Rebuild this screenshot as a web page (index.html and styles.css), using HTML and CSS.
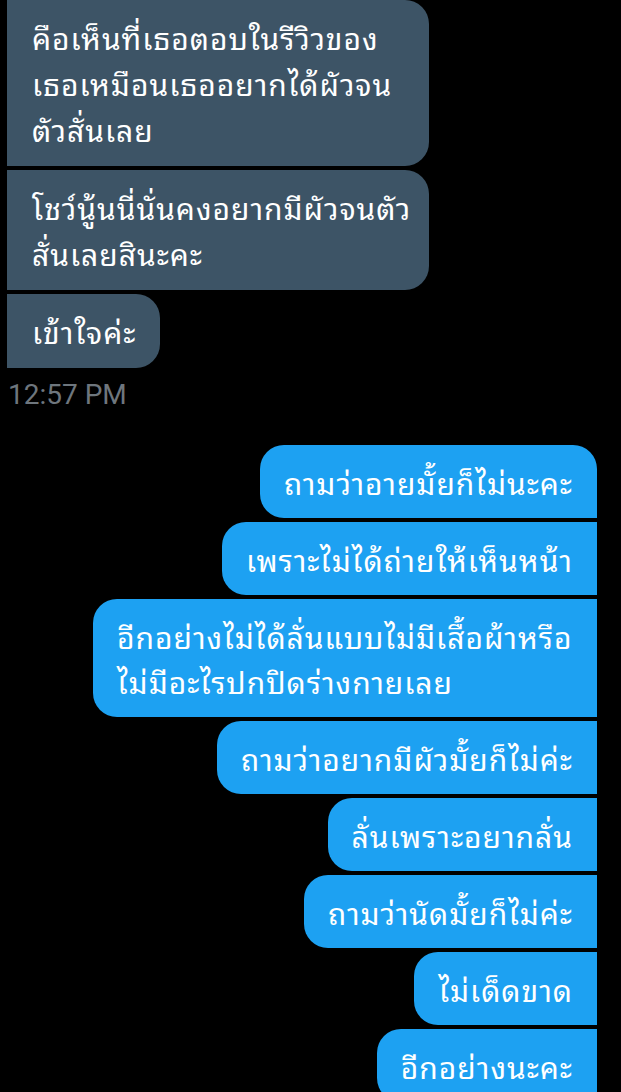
FILE: index.html
```html
<!DOCTYPE html>
<html lang="th">
<head>
  <meta charset="UTF-8">
  <meta name="viewport" content="width=device-width, initial-scale=1">
  <title>Messages</title>
  <link rel="stylesheet" href="styles.css">
</head>
<body>
  <div class="thread">
    <div class="group group-in">
      <div class="bubble in wide">คือเห็นที่เธอตอบในรีวิวของ<br>เธอเหมือนเธออยากได้ผัวจน<br>ตัวสั่นเลย</div>
      <div class="bubble in wide">โชว์นู้นนี่นั่นคงอยากมีผัวจนตัว<br>สั่นเลยสินะคะ</div>
      <div class="bubble in">เข้าใจค่ะ</div>
      <div class="time">12:57 PM</div>
    </div>

    <div class="group group-out">
      <div class="bubble out first">ถามว่าอายมั้ยก็ไม่นะคะ</div>
      <div class="bubble out">เพราะไม่ได้ถ่ายให้เห็นหน้า</div>
      <div class="bubble out wide">อีกอย่างไม่ได้ลั่นแบบไม่มีเสื้อผ้าหรือ<br>ไม่มีอะไรปกปิดร่างกายเลย</div>
      <div class="bubble out">ถามว่าอยากมีผัวมั้ยก็ไม่ค่ะ</div>
      <div class="bubble out">ลั่นเพราะอยากลั่น</div>
      <div class="bubble out">ถามว่านัดมั้ยก็ไม่ค่ะ</div>
      <div class="bubble out">ไม่เด็ดขาด</div>
      <div class="bubble out">อีกอย่างนะคะ</div>
    </div>
  </div>
</body>
</html>
```

FILE: styles.css
```css
:root {
  --bg: #000000;
  --bubble-in: #3d5466;
  --bubble-out: #1da1f2;
  --text: #ffffff;
  --muted: #6e767d;
  --font-thai: "Noto Sans Thai Looped", "Noto Sans Thai UI", Loma, Garuda, Waree, "Noto Sans Thai", "Noto Sans", Roboto, sans-serif;
  --font-ui: Roboto, "Liberation Sans", sans-serif;
}
html, body {
  margin: 0;
  background: var(--bg);
}
body {
  height: 1092px;
  overflow: hidden;
}
.thread {
  display: flex;
  flex-direction: column;
  padding: 0 24px 0 7px;
}
.group {
  display: flex;
  flex-direction: column;
  gap: 4px;
}
.group-in {
  align-items: flex-start;
}
.group-out {
  align-items: flex-end;
  margin-top: 34px;
}
.bubble {
  font-family: var(--font-thai);
  font-size: 30px;
  letter-spacing: 1px;
  color: var(--text);
  padding: 14px 24px;
  box-sizing: border-box;
  white-space: nowrap;
}
.bubble.in {
  background: var(--bubble-in);
  line-height: 46px;
  border-radius: 0 24px 24px 0;
  padding-left: 25px;
}
.bubble.in.wide {
  width: 422px;
}
.bubble.out {
  background: var(--bubble-out);
  line-height: 45px;
  border-radius: 24px 0 0 24px;
}
.bubble.out.wide {
  width: 504px;
}
.bubble.out.first {
  border-top-right-radius: 24px;
}
.time {
  font-family: var(--font-ui);
  font-size: 28px;
  line-height: 32px;
  color: var(--muted);
  margin-top: 7px;
  padding-left: 1px;
}
```
